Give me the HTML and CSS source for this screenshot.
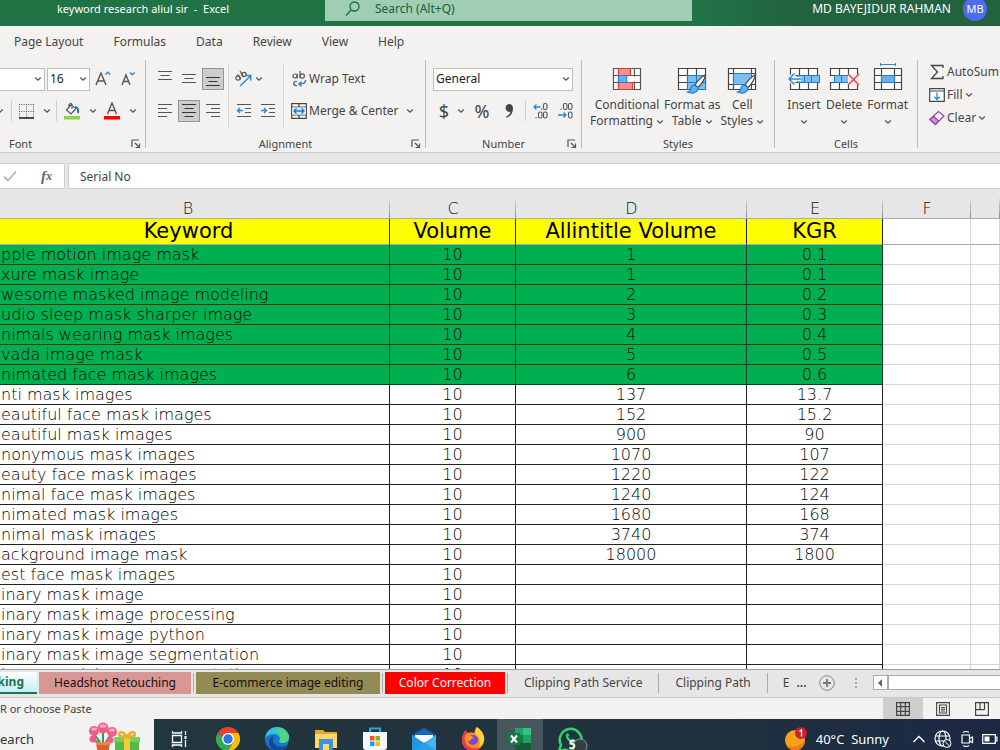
FILE: index.html
```html
<!DOCTYPE html>
<html lang="en">
<head>
<meta charset="utf-8">
<title>keyword research aliul sir - Excel</title>
<link rel="stylesheet" href="styles.css">
</head>
<body>
<svg class="defs" width="0" height="0" aria-hidden="true">
  <symbol id="chev" viewBox="0 0 8 8"><path d="M1.2 2.5 4 5.2 6.8 2.5" fill="none" stroke="#555" stroke-width="1.300"/></symbol>
  <symbol id="launch" viewBox="0 0 10 10"><path d="M1 8V1h7M4 4l4 4M8.5 4.5v4h-4" fill="none" stroke="#555" stroke-width="1.2"/></symbol>
  <symbol id="brush" viewBox="0 0 20 20"><path d="M18.500 .8C14 3 10.500 7 8 11l3 2.500C14.500 10 17.500 6 18.500.8Z" fill="#fff" stroke="#444" stroke-width="1.200"/><path d="M7.500 11c-3 0-3.500 2-3.700 4C3.600 16.500 2.500 17.500.5 18c4 2 10.500 1.200 10.700-4.500Z" fill="#69b0ea" stroke="#1e7fc8" stroke-width="1.200"/></symbol>
</svg>

<header class="title-bar">
  <div class="title-inner">
    <div class="doc-name">keyword research aliul sir&nbsp; -&nbsp; Excel</div>
    <label class="search"><svg width="16" height="16" viewBox="0 0 16 16"><circle cx="9.500" cy="5.500" r="4.500" fill="none" stroke="#1e6b41" stroke-width="1.300"/><path d="M6.200 9 1 14.500" stroke="#1e6b41" stroke-width="1.400"/></svg><input type="text" placeholder="Search (Alt+Q)" aria-label="Search"></label>
    <div class="account"><span>MD BAYEJIDUR RAHMAN</span><button class="avatar">MB</button></div>
  </div>
</header>

<nav class="menu">
  <a href="#">Page Layout</a><a href="#">Formulas</a><a href="#">Data</a><a href="#">Review</a><a href="#">View</a><a href="#">Help</a>
</nav>

<section class="ribbon">
  <div class="group g-font">
    <div class="rows">
      <div class="row">
        <span class="combo combo-name"><select aria-label="Font name"><option></option></select><svg width="8" height="8"><use href="#chev"/></svg></span>
        <span class="combo combo-size"><select aria-label="Font size"><option>16</option></select><svg width="8" height="8"><use href="#chev"/></svg></span>
        <button class="ib w24" aria-label="Increase font size"><svg width="18" height="18" viewBox="0 0 18 18"><path d="M2 15 7 3l5 12M3.800 11h6.400" fill="none" stroke="#555" stroke-width="1.400"/><path d="m11.500 4.500 2.300-2.200 2.300 2.200" fill="none" stroke="#2b88d8" stroke-width="1.400"/></svg></button>
        <button class="ib w24" aria-label="Decrease font size"><svg width="18" height="18" viewBox="0 0 18 18"><path d="M3 15 7 5l4 10M4.500 11.500h5" fill="none" stroke="#555" stroke-width="1.400"/><path d="m11 2.500 2.300 2.200 2.300-2.200" fill="none" stroke="#2b88d8" stroke-width="1.400"/></svg></button>
      </div>
      <div class="row">
        <button class="ib w10" aria-label="Underline options"><svg width="8" height="8"><use href="#chev"/></svg></button>
        <i class="sep"></i>
        <button class="split w44" aria-label="Borders"><svg width="18" height="18" viewBox="0 0 18 18"><path d="M2.500 2v13M9.500 2v13M16.500 2v13M2 2.500h15M2 9.500h15" fill="none" stroke="#555" stroke-dasharray="1 1.300"/><path d="M2 16h15" stroke="#222" stroke-width="1.600"/></svg><svg width="8" height="8"><use href="#chev"/></svg></button>
        <i class="sep gap-right"></i>
        <button class="split w38" aria-label="Fill colour"><svg width="18" height="18" viewBox="0 0 18 18"><path d="M8 3 3.500 8l4.500 4 5-5.500ZM6 5V2.500q2-2 3 0V7" fill="#fff" stroke="#555" stroke-width="1.200"/><path d="M12 5c3 0 3.500 3 3 6" fill="none" stroke="#1e73be" stroke-width="2"/><path d="M1 14h16v3.500H1z" fill="#92d050"/></svg><svg width="8" height="8"><use href="#chev"/></svg></button>
        <button class="split w38" aria-label="Font colour"><svg width="18" height="18" viewBox="0 0 18 18"><path d="M4.500 12 9 1l4.500 11M6 8.500h6" fill="none" stroke="#555" stroke-width="1.400"/><path d="M1 14h16v3.500H1z" fill="#f00"/></svg><svg width="8" height="8"><use href="#chev"/></svg></button>
      </div>
    </div>
    <div class="caption cap-left"><span>Font</span><button aria-label="Font settings"><svg width="10" height="10"><use href="#launch"/></svg></button></div>
  </div>

  <div class="group g-align">
    <div class="cols">
      <div class="trio">
        <button class="ib" aria-label="Top align"><svg width="16" height="16" viewBox="0 0 16 16"><path d="M1 .500h14M3.500 4.500h9M1 8.500h14" stroke="#555" stroke-width="1.200"/></svg></button>
        <button class="ib" aria-label="Middle align"><svg width="16" height="16" viewBox="0 0 16 16"><path d="M1 3.500h14M3.500 7.500h9M1 11.500h14" stroke="#555" stroke-width="1.200"/></svg></button>
        <button class="ib on" aria-label="Bottom align"><svg width="16" height="16" viewBox="0 0 16 16"><path d="M1 6.500h14M3.500 10.500h9M1 14.500h14" stroke="#333" stroke-width="1.200"/></svg></button>
        <button class="ib" aria-label="Align left"><svg width="16" height="16" viewBox="0 0 16 16"><path d="M1 1.500h14M1 5.500h9M1 9.500h14M1 13.500h9" stroke="#555" stroke-width="1.200"/></svg></button>
        <button class="ib on" aria-label="Center"><svg width="16" height="16" viewBox="0 0 16 16"><path d="M1 1.500h14M3.500 5.500h9M1 9.500h14M3.500 13.500h9" stroke="#333" stroke-width="1.200"/></svg></button>
        <button class="ib" aria-label="Align right"><svg width="16" height="16" viewBox="0 0 16 16"><path d="M1 1.500h14M6 5.500h9M1 9.500h14M6 13.500h9" stroke="#555" stroke-width="1.200"/></svg></button>
      </div>
      <div class="pair">
        <button class="split" aria-label="Orientation"><svg width="18" height="18" viewBox="0 0 18 18"><g fill="none" stroke="#555" stroke-width="1.200"><circle cx="4" cy="8" r="2.200"/><path d="M3.500 4.300 7 9.200M6 1l3.500 5.500"/><circle cx="10" cy="4.500" r="2.200"/></g><path d="m6 16 10.500-10M11.500 5.500h5.200v5" fill="none" stroke="#2b88d8" stroke-width="1.400"/></svg><svg width="8" height="8"><use href="#chev"/></svg></button>
        <div class="indent">
          <button class="ib" aria-label="Decrease indent"><svg width="16" height="16" viewBox="0 0 16 16"><path d="M1 1.500h14M9 5.500h6M9 9.500h6M1 13.500h14" stroke="#555" stroke-width="1.200"/><path d="M7 7.500H1.500M4 5 1.500 7.500 4 10" fill="none" stroke="#2b88d8" stroke-width="1.400"/></svg></button>
          <button class="ib" aria-label="Increase indent"><svg width="16" height="16" viewBox="0 0 16 16"><path d="M1 1.500h14M9 5.500h6M9 9.500h6M1 13.500h14" stroke="#555" stroke-width="1.200"/><path d="M1 7.500h5.500M4 5l2.500 2.500L4 10" fill="none" stroke="#2b88d8" stroke-width="1.400"/></svg></button>
        </div>
      </div>
      <div class="stack">
        <button class="tb"><svg width="16" height="18" viewBox="0 0 16 18"><g fill="none" stroke="#555" stroke-width="1.200"><circle cx="4" cy="6" r="2"/><path d="M6.300 3.800v4.500M9 1v7.300M6 11.500c-4-1.500-5 5 0 4"/><circle cx="11.300" cy="6" r="2.100"/></g><path d="M14.500 10c.5 3-2 4-6.500 4M10.500 11.500 8 14l2.500 2.500" fill="none" stroke="#2b88d8" stroke-width="1.500"/></svg>Wrap Text</button>
        <button class="tb"><svg width="16" height="16" viewBox="0 0 16 16"><path d="M.7.700h14.600v14.600H.7zM.7 4h14.600M.7 12h14.600M8 .7V4M8 12v3" fill="#fff" stroke="#444" stroke-width="1.200"/><path d="M1.300 4.500h13.400v7H1.300z" fill="#d9edfb"/><path d="M3 8h10M5.500 5.500 3 8l2.500 2.500M10.500 5.500 13 8l-2.500 2.500" fill="none" stroke="#1979ca" stroke-width="1.300"/></svg>Merge &amp; Center<svg class="far" width="8" height="8"><use href="#chev"/></svg></button>
      </div>
    </div>
    <div class="caption"><span>Alignment</span><button aria-label="Alignment settings"><svg width="10" height="10"><use href="#launch"/></svg></button></div>
  </div>

  <div class="group g-number">
    <div class="rows">
      <div class="row">
        <span class="combo combo-wide"><select aria-label="Number format"><option>General</option></select><svg width="8" height="8"><use href="#chev"/></svg></span>
      </div>
      <div class="row num-row">
        <button class="split big">$<svg width="8" height="8"><use href="#chev"/></svg></button>
        <button class="ib big">%</button>
        <button class="ib" aria-label="Comma style"><svg width="12" height="16" viewBox="0 0 12 16"><path d="M6 1a4 4 0 0 0-.5 7.800C6 9 7 8.800 7.500 8.500 7 11 5.500 12.500 3 13.800l.5 1C8 13 10 9.500 10 5.500 10 2.500 8.500 1 6 1Z" fill="#444"/></svg></button>
        <i class="sep"></i>
        <button class="ib dec" aria-label="Increase decimal"><svg width="18" height="18" viewBox="0 0 18 18"><path d="M8.500 5H2M4.500 2.500 2 5l2.500 2.500" fill="none" stroke="#2b88d8" stroke-width="1.300"/><g fill="none" stroke="#555" stroke-width="1.100"><rect x="11.500" y="1.500" width="3.500" height="6" rx="1.500"/><rect x="6.500" y="10" width="3.500" height="6" rx="1.500"/><rect x="11.500" y="10" width="3.500" height="6" rx="1.500"/></g><path d="M3.500 15h1.300v1.300H3.500zM9 6.500h1.200v1.300H9z" fill="#555"/></svg></button>
        <button class="ib dec" aria-label="Decrease decimal"><svg width="18" height="18" viewBox="0 0 18 18"><path d="M1 13h8M6.500 10.500 9 13l-2.500 2.500" fill="none" stroke="#2b88d8" stroke-width="1.300"/><g fill="none" stroke="#555" stroke-width="1.100"><rect x="6.500" y="1.500" width="3.500" height="6" rx="1.500"/><rect x="11.500" y="1.500" width="3.500" height="6" rx="1.500"/><rect x="11.500" y="10" width="3.500" height="6" rx="1.500"/></g><path d="M3.500 6.500h1.300v1.300H3.500z" fill="#555"/></svg></button>
      </div>
    </div>
    <div class="caption"><span>Number</span><button aria-label="Number settings"><svg width="10" height="10"><use href="#launch"/></svg></button></div>
  </div>

  <div class="group g-styles">
    <div class="bigs">
      <button class="bb"><svg width="30" height="32" viewBox="0 0 30 32"><path d="M1.500 6.500h27v21h-27zM1.500 13.500h27M1.500 20.500h27M6.500 6v21M22.500 6v21" fill="#fff" stroke="#555" stroke-width="1.200"/><path d="M6.500 6.500h12v7h-12zM6.500 20.500h14v7h-14z" fill="#f79090" stroke="#e03a3a" stroke-width="1.200"/><path d="M6.500 13.500H15v7H6.500z" fill="#69b0ea" stroke="#1e7fc8"/><path d="M15.500 14.500h10v5h-10z" fill="#fff"/></svg><span>Conditional<br>Formatting <svg width="8" height="8"><use href="#chev"/></svg></span></button>
      <button class="bb"><svg width="34" height="32" viewBox="0 0 34 32"><path d="M3.500 6.500h27v21h-27zM3.500 13.500h27M3.500 20.500h27M12.500 6v21M21.500 6v21" fill="#fff" stroke="#444" stroke-width="1.200"/><path d="M12.500 13.500h18v14h-18z" fill="#7fbdf0" stroke="#1e7fc8"/><path d="M12.500 20.500h18M21.500 13.500v14" stroke="#1e7fc8"/><svg x="11" y="12" width="22" height="20"><use href="#brush"/></svg></svg><span>Format as<br>Table <svg width="8" height="8"><use href="#chev"/></svg></span></button>
      <button class="bb"><svg width="34" height="32" viewBox="0 0 34 32"><path d="M3.500 6.500h27v21h-27zM3.500 11.500h27M3.500 22.500h27M8.500 6v21M26.500 6v21" fill="#fff" stroke="#444" stroke-width="1.200"/><path d="M8.500 11.500h18v11h-18z" fill="#7fbdf0" stroke="#1e7fc8"/><svg x="11" y="12" width="22" height="20"><use href="#brush"/></svg></svg><span>Cell<br>Styles <svg width="8" height="8"><use href="#chev"/></svg></span></button>
    </div>
    <div class="caption"><span>Styles</span></div>
  </div>

  <div class="group g-cells">
    <div class="bigs">
      <button class="bb"><svg width="34" height="32" viewBox="0 0 34 32"><path d="M3.500 6.500h27v21h-27zM3.500 13.500h27M3.500 20.500h27M12.500 6v21M21.500 6v21" fill="#fff" stroke="#444" stroke-width="1.200"/><path d="M10.500 13.500h22v7h-22z" fill="#7fbdf0" stroke="#1e7fc8"/><path d="M17.500 13.500v7M24.500 13.500v7" stroke="#1e7fc8"/><path d="M14 17H2M7.500 11.500 2 17l5.500 5.500" fill="none" stroke="#fff" stroke-width="4"/><path d="M14 17H2M7.500 11.500 2 17l5.500 5.500" fill="none" stroke="#2b88d8" stroke-width="1.500"/></svg><span>Insert<br><svg width="8" height="8"><use href="#chev"/></svg></span></button>
      <button class="bb"><svg width="34" height="32" viewBox="0 0 34 32"><path d="M3.500 6.500h27v21h-27zM3.500 13.500h27M3.500 20.500h27M12.500 6v21M21.500 6v21" fill="#fff" stroke="#444" stroke-width="1.200"/><path d="M2 14h5v6H2z" fill="#f3f2f1"/><path d="M7.500 13.500h14v7h-14z" fill="#7fbdf0" stroke="#1e7fc8"/><path d="M14.500 13.500v7" stroke="#1e7fc8"/><path d="M21 12h12v11H21z" fill="#f3f2f1"/><path d="m21 12 11 11M32 12l-11 11" stroke="#e8484c" stroke-width="1.500"/></svg><span>Delete<br><svg width="8" height="8"><use href="#chev"/></svg></span></button>
      <button class="bb"><svg width="34" height="32" viewBox="0 0 34 32"><path d="M3.500 6.500h27v21h-27zM3.500 13.500h27M3.500 20.500h27M10.500 6v21M23.500 6v21" fill="#fff" stroke="#444" stroke-width="1.200"/><path d="M10.500 13.500h13v7h-13z" fill="#69b0ea" stroke="#1e7fc8"/><path d="M9.500 1v3M24.500 1v3M9.500 2.500h15" stroke="#2b88d8"/></svg><span>Format<br><svg width="8" height="8"><use href="#chev"/></svg></span></button>
    </div>
    <div class="caption"><span>Cells</span></div>
  </div>

  <div class="group g-edit">
    <button class="eb"><svg width="16" height="16" viewBox="0 0 16 16"><path d="M14 4V1.500H2.500L8.500 8l-6 6.500H14V12" fill="none" stroke="#444" stroke-width="1.300"/></svg>AutoSum</button>
    <button class="eb"><svg width="16" height="16" viewBox="0 0 16 16"><path d="M.7 1.700h14.600v12.600H.7zM.7 4h14.600" fill="#fff" stroke="#444" stroke-width="1.200"/><path d="M8 5.500v7M5.300 9.800 8 12.500l2.700-2.700" fill="none" stroke="#2b88d8" stroke-width="1.300"/></svg>Fill <svg width="8" height="8"><use href="#chev"/></svg></button>
    <button class="eb"><svg width="16" height="16" viewBox="0 0 16 16"><path d="m1 9.500 8.500-8L15 6l-8.500 8.500Z" fill="#fff" stroke="#9b3fa8" stroke-width="1.200"/><path d="m1 9.500 3.500-3.300L9.500 11l-3.200 3.500Z" fill="#d393dc" stroke="#9b3fa8" stroke-width="1.200"/></svg>Clear <svg width="8" height="8"><use href="#chev"/></svg></button>
  </div>
</section>

<section class="formula-bar">
  <div class="fx-box">
    <button aria-label="Enter"><svg width="14" height="12" viewBox="0 0 14 12"><path d="m1 6.500 4 4L13 1.500" fill="none" stroke="#b5b5b5" stroke-width="1.800"/></svg></button>
    <button class="fx" aria-label="Insert function">f<sub>x</sub></button>
  </div>
  <input class="formula" type="text" value="Serial No" aria-label="Formula">
</section>

<main class="grid">
<table>
<colgroup><col class="cb"><col class="cc"><col class="cd"><col class="ce"><col class="cf"><col></colgroup>
<thead><tr><th>B</th><th>C</th><th>D</th><th>E</th><th>F</th><th></th></tr></thead>
<tbody>
<tr class="head"><td>Keyword</td><td>Volume</td><td>Allintitle Volume</td><td>KGR</td><td></td><td></td></tr>
<tr class="hit"><td>pple motion image mask</td><td>10</td><td>1</td><td>0.1</td><td></td><td></td></tr>
<tr class="hit"><td>xure mask image</td><td>10</td><td>1</td><td>0.1</td><td></td><td></td></tr>
<tr class="hit"><td>wesome masked image modeling</td><td>10</td><td>2</td><td>0.2</td><td></td><td></td></tr>
<tr class="hit"><td>udio sleep mask sharper image</td><td>10</td><td>3</td><td>0.3</td><td></td><td></td></tr>
<tr class="hit"><td>nimals wearing mask images</td><td>10</td><td>4</td><td>0.4</td><td></td><td></td></tr>
<tr class="hit"><td>vada image mask</td><td>10</td><td>5</td><td>0.5</td><td></td><td></td></tr>
<tr class="hit"><td>nimated face mask images</td><td>10</td><td>6</td><td>0.6</td><td></td><td></td></tr>
<tr><td>nti mask images</td><td>10</td><td>137</td><td>13.7</td><td></td><td></td></tr>
<tr><td>eautiful face mask images</td><td>10</td><td>152</td><td>15.2</td><td></td><td></td></tr>
<tr><td>eautiful mask images</td><td>10</td><td>900</td><td>90</td><td></td><td></td></tr>
<tr><td>nonymous mask images</td><td>10</td><td>1070</td><td>107</td><td></td><td></td></tr>
<tr><td>eauty face mask images</td><td>10</td><td>1220</td><td>122</td><td></td><td></td></tr>
<tr><td>nimal face mask images</td><td>10</td><td>1240</td><td>124</td><td></td><td></td></tr>
<tr><td>nimated mask images</td><td>10</td><td>1680</td><td>168</td><td></td><td></td></tr>
<tr><td>nimal mask images</td><td>10</td><td>3740</td><td>374</td><td></td><td></td></tr>
<tr><td>ackground image mask</td><td>10</td><td>18000</td><td>1800</td><td></td><td></td></tr>
<tr><td>est face mask images</td><td>10</td><td></td><td></td><td></td><td></td></tr>
<tr><td>inary mask image</td><td>10</td><td></td><td></td><td></td><td></td></tr>
<tr><td>inary mask image processing</td><td>10</td><td></td><td></td><td></td><td></td></tr>
<tr><td>inary mask image python</td><td>10</td><td></td><td></td><td></td><td></td></tr>
<tr><td>inary mask image segmentation</td><td>10</td><td></td><td></td><td></td><td></td></tr>
<tr><td>inary mask image segmentation</td><td>10</td><td></td><td></td><td></td><td></td></tr>
</tbody>
</table>
</main>

<section class="sheets">
  <button class="tab current">king</button>
  <button class="tab pink">Headshot Retouching</button><i class="sep"></i>
  <button class="tab olive">E-commerce image editing</button><i class="sep"></i>
  <button class="tab red">Color Correction</button><i class="sep"></i>
  <button class="tab plain">Clipping Path Service</button><i class="sep"></i>
  <button class="tab plain">Clipping Path</button><i class="sep"></i>
  <button class="tab cut">E</button>
  <button class="more">...</button>
  <button class="add" aria-label="New sheet"><svg width="16" height="16" viewBox="0 0 16 16"><circle cx="8" cy="8" r="7.300" fill="none" stroke="#888"/><path d="M8 4v8M4 8h8" stroke="#777" stroke-width="1.800"/></svg></button>
  <svg class="dots" width="4" height="12" viewBox="0 0 4 12"><path d="M1 1h2v2H1zM1 5h2v2H1zM1 9h2v2H1z" fill="#aaa"/></svg>
  <div class="hscroll"><button aria-label="Scroll left"><svg width="6" height="8" viewBox="0 0 6 8"><path d="M5 0v8L1 4Z" fill="#666"/></svg></button><span></span></div>
</section>

<footer class="status">
  <span>R or choose Paste</span>
  <div class="views">
    <button class="active" aria-label="Normal view"><svg width="14" height="14" viewBox="0 0 14 14"><path d="M.6.600h12.800v12.800H.6zM4.700.6v12.800M9.300.6v12.800M.6 4.700h12.800M.6 9.300h12.800" fill="none" stroke="#444" stroke-width="1.200"/></svg></button>
    <button aria-label="Page layout view"><svg width="14" height="14" viewBox="0 0 14 14"><path d="M.6.600h12.800v12.800H.6zM3.500 3h7v8h-7zM5 5.500h4M5 7.200h4M5 9h4" fill="none" stroke="#444" stroke-width="1.100"/></svg></button>
    <button aria-label="Page break view"><svg width="14" height="14" viewBox="0 0 14 14"><path d="M.6.600h12.800v12.800H.6zM5 .6v7M9.500.6v7M.6 7.600H9.500" fill="none" stroke="#444" stroke-width="1.200"/></svg></button>
  </div>
</footer>

<div class="taskbar"><div class="task-inner">
  <div class="task-search"><span>earch</span>
    <svg width="54" height="34" viewBox="0 0 54 34"><g stroke="#2f9e54" stroke-width="2" fill="none"><path d="M16 22V9M13 20 7 12M19 20l6-9M13 20l-7-1M19 20l6-1"/></g><g fill="#ee5f88"><circle cx="16" cy="6" r="5.500"/><circle cx="7" cy="9" r="5"/><circle cx="25" cy="10" r="5"/><circle cx="6" cy="17" r="3.500"/><circle cx="23" cy="18" r="3.500"/></g><g fill="#ffa9bd"><ellipse cx="16" cy="4" rx="3.500" ry="1.800"/><ellipse cx="7" cy="7" rx="3" ry="1.600"/><ellipse cx="25" cy="8" rx="3" ry="1.600"/></g><path d="M9 20h14l-2 14H11Z" fill="#d9622b"/><path d="M9 20h14v3H9Z" fill="#ee8347"/><path d="M28 17h24v17H28z" fill="#54b948"/><path d="M27 15h26v5H27z" fill="#75cf5a"/><path d="M37 15h6v19h-6z" fill="#f6c83c"/><path d="M40 15c-5-8-10-4-7-1ZM40 15c5-8 10-4 7-1Z" fill="none" stroke="#e9ad22" stroke-width="2.500"/></svg>
  </div>
  <button class="app" aria-label="Task view"><svg width="18" height="18" viewBox="0 0 18 18"><path d="M2.500 5.500h9v7h-9zM2.500 1v2h9V1M2.500 17v-2h9v2M15.500 1v4M15.500 10v7" fill="none" stroke="#fff" stroke-width="1.300"/><path d="M14.500 6h2v3h-2z" fill="#fff"/></svg></button>
  <button class="app" aria-label="Chrome"><svg width="24" height="24" viewBox="0 0 24 24"><path d="M12 12 1.600 6A12 12 0 0 1 22.400 6Z" fill="#e94235"/><path d="M12 12 1.600 6A12 12 0 0 0 12 24l5.200-9Z" fill="#34a853"/><path d="M12 12 17.200 15 12 24A12 12 0 0 0 22.400 6H12Z" fill="#fbbc05"/><circle cx="12" cy="12" r="6" fill="#fff"/><circle cx="12" cy="12" r="4.700" fill="#2f75e8"/></svg></button>
  <button class="app" aria-label="Edge"><svg width="24" height="24" viewBox="0 0 24 24"><circle cx="12" cy="12" r="12" fill="#1674c9"/><path d="M0 12C1 4 6 0 12 0c7 0 12 5 12 10 0 4-3 6-6.500 6-2.500 0-4-1-3-2.500C16 10 13 7 9 7c-4 0-8 2-9 5Z" fill="#35c3d6"/><path d="M16 1c5 2 8 6 8 9 0 4-3 6-6.500 6-2.500 0-4-1-3-2.500C17 9 15 4 9 4Z" fill="#4fd483"/><path d="M9 9c-4 7 3 13 12 10-5 7-16 6-17-3 0-4 2-6 5-7Z" fill="#0e4b96"/></svg></button>
  <button class="app" aria-label="File Explorer"><svg width="24" height="24" viewBox="0 0 24 24"><path d="M1 3h8l2 2h12v16H1z" fill="#e9a825"/><path d="M1 7h22v14H1z" fill="#ffd867"/><path d="M5 12h14v12H5z" fill="#3b94df"/><path d="M9 17h6v7H9z" fill="#ffd867"/></svg></button>
  <button class="app" aria-label="Store"><svg width="24" height="24" viewBox="0 0 24 24"><path d="M7 6V1.500h10V6" fill="none" stroke="#22a7ea" stroke-width="2"/><path d="M0 5h24v15q0 3-3 3H3q-3 0-3-3Z" fill="#f5f7f9"/><path d="M7 9h4.500v4.500H7z" fill="#f35325"/><path d="M12.500 9H17v4.500h-4.500z" fill="#81bc06"/><path d="M7 14.500h4.500V19H7z" fill="#05a6f0"/><path d="M12.500 14.500H17V19h-4.500z" fill="#ffba08"/></svg></button>
  <button class="app" aria-label="Mail"><svg width="24" height="24" viewBox="0 0 24 24"><path d="M0 8 12 1l12 7v16H0z" fill="#1368b8"/><path d="M3 8h18v8H3z" fill="#fff"/><path d="M0 8 12 16 0 24Z" fill="#2196e3"/><path d="M24 8 12 16l12 8Z" fill="#41b4ef"/><path d="m0 24 12-9 12 9Z" fill="#2a9ce8"/></svg></button>
  <button class="app" aria-label="Firefox"><svg width="24" height="24" viewBox="0 0 24 24"><path d="M16 0c5 4 8 8 7 14-1 6-6 10-11 10S1 20 1 13c0-4 2-8 4-10l1 3c3-1 5-1 7 0 1-2 1-4 3-6Z" fill="#ff8a1f"/><path d="M16 0c5 4 8 8 7 14-1 4-4 6-6 7 3-5 2-11-3-14 1-3 0-5 2-7Z" fill="#ffd23c"/><path d="M1 13c0 7 5 11 11 11 3 0 6-2 8-4-7 3-15 1-16-6-1-3 0-6 2-8L5 3C3 5 1 9 1 13Z" fill="#f0364f"/><circle cx="12" cy="13" r="5" fill="#7c45d8"/><path d="M6 9c3-1 5 0 7 2-3 0-3 3-5 3-2-1-3-3-2-5Z" fill="#ff9a25"/></svg></button>
  <button class="app running" aria-label="Excel"><svg width="24" height="24" viewBox="0 0 24 24"><path d="M7 1h16v22H7z" fill="#21a366"/><path d="M15 1h8v7h-8z" fill="#33c481"/><path d="M7 8h8v8H7z" fill="#107c41"/><path d="M7 16h16v7H7z" fill="#185c37"/><path d="M0 6h12v12H0z" fill="#107c41"/><path d="m3 8.500 6 7M9 8.500l-6 7" stroke="#fff" stroke-width="2"/></svg></button>
  <button class="app" aria-label="WhatsApp"><svg width="34" height="28" viewBox="0 0 34 28"><path d="m5 26 2-6a11 11 0 1 1 4.500 4.500Z" fill="none" stroke="#2fd366" stroke-width="2.500"/><path d="M12.500 9c-3 3 4.500 11.500 8.500 8.500l.5-2.500-3-1.500-1.500 1.500-3-3 1.300-1.500L14 8Z" fill="#2fd366"/><circle cx="26" cy="21" r="7" fill="#333e47" stroke="#8d979d"/></svg><b>5</b></button>
  <div class="tray">
    <span class="sun"><svg width="24" height="24" viewBox="0 0 24 24"><circle cx="11" cy="13" r="10" fill="#f9a11b"/><path d="M2 18a10 10 0 0 0 19-5c-3 5-11 9-19 5Z" fill="#f0781e"/><circle cx="17" cy="6" r="6" fill="#c8252c"/><path d="m15.500 4.500 2-1.500v6.500" fill="none" stroke="#fff" stroke-width="1.200"/></svg></span>
    <span class="weather">40°C&nbsp; Sunny</span>
    <svg width="14" height="10" viewBox="0 0 14 10"><path d="m1.500 8 5.500-5.500L12.500 8" fill="none" stroke="#fff" stroke-width="1.300"/></svg>
    <svg width="18" height="18" viewBox="0 0 18 18"><g fill="none" stroke="#fff" stroke-width="1.200"><circle cx="8.500" cy="8.500" r="7.500"/><ellipse cx="8.500" cy="8.500" rx="3.500" ry="7.500"/><path d="M1 6h15M1 11h15"/></g><circle cx="13" cy="13.500" r="4" fill="#1e2c43" stroke="#fff"/><path d="m10.500 11 5 5" stroke="#fff"/></svg>
    <svg width="14" height="18" viewBox="0 0 14 18"><path d="M2 5h7.500v8H2zM9.500 8.500l3-1.500v5.500l-3-1.500M3 2.500q3-2 6 0M3 15.500q3 2 6 0" fill="none" stroke="#fff" stroke-width="1.200"/></svg>
    <svg width="16" height="10" viewBox="0 0 16 10"><path d="M.7.700h12.600v8.600H.7zM13.500 3H15v4h-1.500" fill="none" stroke="#fff" stroke-width="1.200"/><path d="M2.500 2.500h5v5h-5z" fill="#fff"/></svg>
  </div>
</div></div>
</body>
</html>
```

FILE: styles.css
```css
* { box-sizing: border-box; }
body {
  margin: 0;
  height: 100vh;
  display: flex;
  flex-direction: column;
  overflow: hidden;
  background: #f3f2f1;
  color: #444;
  font: 12px/16px "Noto Sans", "Open Sans", sans-serif;
}
button, input, select { font: inherit; color: inherit; border: 0; margin: 0; padding: 0; background: none; }
button { display: flex; align-items: center; justify-content: center; white-space: nowrap; }
svg { flex: none; display: block; }
.defs { position: absolute; }
.sep { flex: none; width: 1px; height: 20px; background: #cfcdcb; }
.gap-right { margin-right: 3px; }

/* title bar */
.title-bar { flex: none; height: 26px; overflow: hidden; background: linear-gradient(90deg, #217346 70%, #22623f 80%); color: #fff; }
.title-inner { display: grid; grid-template-columns: 325fr 367fr 308fr; height: 25px; margin-top: -4px; align-items: center; }
.doc-name { padding-left: 57px; font-size: 11px; white-space: nowrap; }
.search { align-self: stretch; display: flex; align-items: center; gap: 14px; padding-left: 20px; background: #9fceb4; color: #17603a; }
.search input { flex: 1; min-width: 0; }
.search input::placeholder { color: #17603a; opacity: 1; }
.account { display: flex; align-items: center; justify-content: flex-end; gap: 12px; padding-right: 13px; white-space: nowrap; }
.avatar { width: 24px; height: 24px; border-radius: 50%; background: #4f6bed; font-size: 11px; }

/* ribbon tabs */
.menu { flex: none; display: flex; align-items: center; gap: 30px; height: 31px; padding-left: 14px; }
.menu a { color: #444; text-decoration: none; white-space: nowrap; }

/* ribbon */
.ribbon { flex: none; display: flex; height: 96px; padding-top: 3px; border-bottom: 1px solid #c8c6c4; }
.group { flex: none; display: flex; flex-direction: column; justify-content: space-between; height: 88px; border-right: 1px solid #c0bebc; }
.g-font { width: 146px; }
.g-align { width: 280px; }
.g-number { width: 156px; }
.g-styles { width: 193px; }
.g-cells { width: 143px; }
.g-edit { flex: 1; min-width: 0; border-right: 0; padding-left: 11px; justify-content: flex-start; }
.rows { display: grid; grid-template-rows: 32px 32px; padding-top: 3px; }
.row { display: flex; align-items: center; }
.row .ib, .row .split { height: 22px; }
.ib { flex: none; width: 22px; height: 22px; }
.ib.w24 { width: 25px; }
.ib.w10 { width: 12px; justify-content: flex-start; margin-left: -4px; margin-right: 3px; }
.ib.on { background: #cfcdcc; border: 1px solid #979593; }
.split { flex: none; gap: 8px; }
.split.w44 { width: 44px; }
.split.w38 { width: 40px; }
.combo { display: grid; align-items: center; height: 23px; border: 1px solid #c0bebc; background: #fff; }
.combo > * { grid-area: 1 / 1; }
.combo svg { justify-self: end; margin-right: 2px; pointer-events: none; }
.combo select { appearance: none; width: 100%; height: 20px; padding-left: 2px; color: #222; }
.combo-name { width: 45px; border-left: 0; margin-right: 2px; }
.combo-size { width: 43px; }
.combo-wide { width: 140px; margin-left: 7px; }
.caption { display: grid; grid-template-columns: 18px 1fr 18px; align-items: center; height: 16px; margin-bottom: -4px; font-size: 11px; text-align: center; }
.caption span { grid-column: 2; }
.caption button { height: 16px; }
.cap-left { grid-template-columns: 0 1fr 18px; text-align: left; }
.cap-left span { padding-left: 9px; }
.cols { display: flex; padding: 3px 0 0 8px; }
.trio { display: grid; grid-template-columns: repeat(3, 22px); grid-auto-rows: 32px; gap: 0 2px; align-items: center; padding-right: 4px; border-right: 1px solid #d8d6d4; }
.pair { display: grid; grid-template-rows: 32px 32px; align-items: center; width: 55px; padding-left: 4px; border-right: 1px solid #d8d6d4; }
.pair .split { gap: 3px; justify-content: flex-start; padding-left: 1px; }
.indent { display: flex; gap: 2px; }
.stack { display: grid; grid-template-rows: 32px 32px; padding-left: 7px; }
.tb { justify-content: flex-start; gap: 2px; }
.far { margin-left: 5px; }
.num-row { padding-left: 12px; gap: 5px; }
.big { font-size: 18px; }
.split.big { width: 28px; }
.ib.dec { width: 20px; }
.bb { flex-direction: column; justify-content: flex-start; gap: 3px; }
.bb span { text-align: center; }
.bb span svg { display: inline-block; vertical-align: middle; }
.bigs { display: flex; justify-content: space-between; padding-top: 2px; }
.g-styles .bigs { padding-left: 8px; padding-right: 10px; }
.g-cells .bigs { padding-left: 12px; padding-right: 9px; }
.eb { justify-content: flex-start; gap: 2px; height: 23px; flex: none; }

/* formula bar */
.formula-bar { flex: none; display: flex; gap: 3px; padding: 10px 0 7px; background: #e6e6e6; }
.fx-box { flex: none; display: flex; justify-content: space-between; width: 65px; height: 26px; padding: 0 12px 0 3px; background: #fff; border: 1px solid #cfcfcf; border-left: 0; }
.fx { font: italic bold 15px/16px "Liberation Serif", serif; color: #666; }
.fx sub { font-size: 12px; line-height: 8px; }
.formula { flex: 1; min-width: 0; height: 26px; padding-left: 11px; background: #fff; border: 1px solid #cfcfcf; border-right: 0; }

/* cells */
.grid { flex: 1; min-height: 0; overflow: hidden; background: #fff; }
table { width: 100%; table-layout: fixed; border-collapse: separate; border-spacing: 0; font: 200 16px/19px "DejaVu Sans", "DejaVu Sans Light", sans-serif; color: #000; }
.cb { width: 39%; }
.cc { width: 12.6%; }
.cd { width: 23.1%; }
.ce { width: 13.6%; }
.cf { width: 8.8%; }
th { height: 23px; padding: 4px 0 0; font-weight: 200; line-height: 18px; color: #111; background: linear-gradient(#e6e6e600, #8a8a8a) right / 1px 100% no-repeat #e6e6e6; border-bottom: 1px solid #ababab; }
th:first-child { padding-right: 14px; }
td { height: 20px; padding: 0; text-align: center; white-space: nowrap; border-right: 1px solid #222; border-bottom: 1px solid #222; }
td:first-child { text-align: left; padding-left: 1px; }
td:nth-child(n+5) { border-color: #d6d6d6; }
.hit td:nth-child(-n+4) { background: #00b050; border-color: #0b3a20; }
.head td { height: 26px; font-size: 21px; font-weight: 400; line-height: 25px; border-bottom-color: #a8a8a8; }
.head td:first-child { text-align: center; padding: 0 12px 0 0; }
.head td:nth-child(-n+4) { background: #ff0; }

/* sheet tabs */
.sheets { flex: none; display: flex; align-items: center; height: 29px; padding-bottom: 2px; background: #e6e6e6; border-top: 1px solid #9b9b9b; border-bottom: 1px solid #c6c6c6; }
.tab { height: 22px; color: #111; }
.current { width: 37px; margin-right: 2px; padding-right: 13px; justify-content: flex-end; color: #217346; font-weight: bold; background: linear-gradient(#fff, #c2eefb); border-bottom: 2px solid #217346; }
.pink { width: 152px; background: #da9694; }
.olive { width: 184px; background: #948a54; }
.red { width: 120px; background: #f00; color: #fff; }
.sheets .sep { margin: 0 2px; background: #ababab; }
.plain { padding: 0 14px; color: #444; }
.cut { padding: 0 7px 0 13px; color: #444; }
.more { color: #217346; font-weight: bold; }
.add { margin: 0 19px 0 12px; }
.hscroll { flex: 1; display: flex; height: 15px; margin-left: 15px; }
.hscroll button { width: 15px; background: #fff; border: 1px solid #ababab; }
.hscroll span { flex: 1; background: #fff; border: 1px solid #ababab; border-right: 0; }

/* status bar */
.status { flex: none; display: flex; align-items: center; justify-content: space-between; height: 21px; font-size: 11px; }
.views { display: flex; align-self: stretch; }
.views button { width: 40px; }
.views button:last-child { width: 37px; }
.views .active { background: #d0cecd; }

/* taskbar */
.taskbar { flex: none; height: 31px; overflow: hidden; background: linear-gradient(90deg, #22373f, #20323e 65%, #1c2844); color: #fff; }
.task-inner { display: flex; height: 40px; }
.task-search { flex: none; display: flex; align-items: center; justify-content: space-between; width: 154px; padding-right: 13px; background: #f2f2f2; color: #333; font-size: 13px; }
.app { flex: none; display: grid; place-items: center; width: 49px; }
.app > * { grid-area: 1 / 1; }
.app b { justify-self: end; padding: 12px 12px 0 0; }
.running { width: 46px; background: #46565d; margin-right: 3px; }
.tray { flex: 1; display: flex; align-items: center; justify-content: flex-end; gap: 8px; padding-right: 2px; white-space: nowrap; }
.weather { margin-right: 15px; font-size: 13px; }
```
